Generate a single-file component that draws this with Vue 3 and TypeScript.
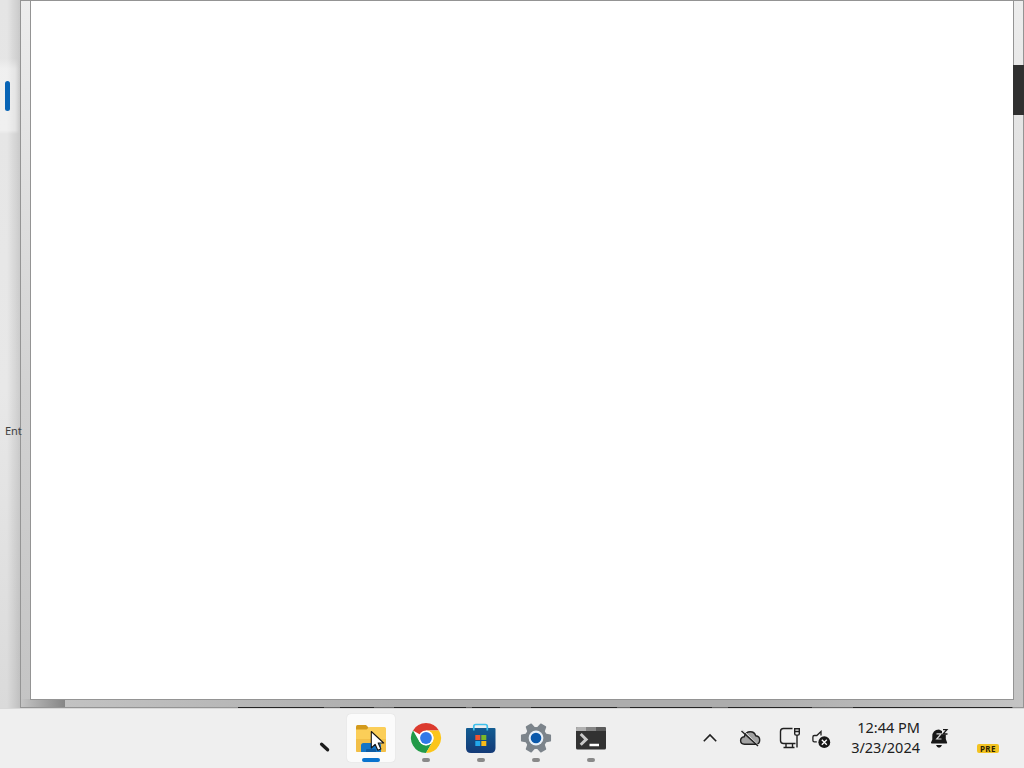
<script setup lang="ts">
const darkEdges = [
  { left: 238, width: 86 },
  { left: 340, width: 34 },
  { left: 394, width: 72 },
  { left: 472, width: 28 },
  { left: 531, width: 86 },
  { left: 630, width: 82 },
  { left: 728, width: 84 },
  { left: 853, width: 159 },
]
</script>

<template>
  <div class="desktop">
    <div class="workspace">
      <aside class="back-window">
        <div class="nav-item"><i class="nav-mark"></i></div>
        <span class="label">Ent</span>
      </aside>
      <section class="window">
        <i class="bottom-frame"></i>
        <i class="corner-shade"></i>
        <i class="edge base"></i>
        <i v-for="e in darkEdges" :key="e.left" class="edge" :style="{ left: e.left - 21 + 'px', width: e.width + 'px' }"></i>
        <div class="canvas"></div>
        <i class="dark-strip"></i>
      </section>
    </div>

    <footer class="taskbar">
      <div class="apps">
        <svg class="pen" width="12" height="12" viewBox="0 0 12 12"><path d="M2.600 3.200 8.600 8.800" stroke="#1b1b1b" stroke-width="3.300" stroke-linecap="round" /></svg>
        <div class="app active">
          <svg width="48" height="48" viewBox="0 0 48 48">
            <path d="M9 12.500Q9 11 10.500 11H19l3 3-3 3H9z" fill="#d39a1c" />
            <path d="M9 15.500h10.500l3-2.500H37.500Q39 13 39 14.500V36.500Q39 38 37.500 38H10.500Q9 38 9 36.500z" fill="#fbce58" />
            <path d="M9 25h30v11.500Q39 38 37.500 38H10.500Q9 38 9 36.500z" fill="#f2bf48" />
            <path d="M14 38V31.500Q14 29 16.500 29H31.500Q34 29 34 31.500V38z" fill="#1475c6" />
            <path d="M19 38v-2q0-1 1-1h8q1 0 1 1v2z" fill="#0e5ca3" />
            <path d="M24.300 17.500V34l3.800-3.700 2.700 6 3.100-1.400-2.700-5.900h5.500z" fill="#fff" stroke="#171717" stroke-width="1.100" stroke-linejoin="round" />
          </svg>
          <i class="pill wide"></i>
        </div>
        <div class="app">
          <svg width="48" height="48" viewBox="0 0 48 48">
            <circle cx="24" cy="24" r="15" fill="#fff" />
            <path d="M24 24 11 16.500A15 15 0 0 1 37 16.500H24z" fill="#db3a2e" />
            <path d="M11 16.500A15 15 0 0 0 24 39l6.500-11.250-6.500 3.750-6.500-3.750z" fill="#229a48" />
            <path d="M37 16.500A15 15 0 0 1 24 39l6.500-11.250A7.500 7.500 0 0 0 24 16.500z" fill="#fbc51b" />
            <circle cx="24" cy="24" r="7.500" fill="#fff" /><circle cx="24" cy="24" r="5.900" fill="#3079e8" />
          </svg>
          <i class="pill"></i>
        </div>
        <div class="app">
          <svg width="48" height="48" viewBox="0 0 48 48">
            <defs><linearGradient id="bag" x1="0" y1="0" x2="0" y2="1"><stop stop-color="#125c92" /><stop offset="1" stop-color="#143a77" /></linearGradient></defs>
            <path d="M9 15q0-1 1-1h27.500q1 0 1 1v19q0 5-5 5H14q-5 0-5-5z" fill="url(#bag)" />
            <path d="M16.800 16.500v-4q0-2 2-2h9.500q2 0 2 2v4" fill="none" stroke="#3fc0ec" stroke-width="1.700" />
            <path d="M18.300 21h5v5h-5z" fill="#ef5430" /><path d="M24.300 21h5v5h-5z" fill="#7cb927" />
            <path d="M18.300 27h5v5h-5z" fill="#22a7eb" /><path d="M24.300 27h5v5h-5z" fill="#fabb18" />
          </svg>
          <i class="pill"></i>
        </div>
        <div class="app">
          <svg width="48" height="48" viewBox="0 0 48 48">
            <g fill="#7c848b" stroke="#7c848b" stroke-width="1.500" stroke-linejoin="round">
              <circle cx="24" cy="24" r="10.300" />
              <path v-for="n in 6" :key="n" d="M20.200 15 21.300 9.700h5.400l1.100 5.300z" :transform="`rotate(${n * 60 + 30} 24 24)`" />
            </g>
            <circle cx="24" cy="24" r="7.400" fill="#e8f0f8" /><circle cx="24" cy="24" r="5.300" fill="#0b59ab" />
          </svg>
          <i class="pill"></i>
        </div>
        <div class="app">
          <svg width="48" height="48" viewBox="0 0 48 48">
            <rect x="9" y="13" width="30" height="22.500" rx="1.500" fill="#323232" />
            <path d="M10.500 13H19v4H9v-2.500q0-1.500 1.500-1.500z" fill="#b1b1b1" /><path d="M19 13h10v4H19z" fill="#858585" /><path d="M29 13h8.500q1.500 0 1.500 1.500V17H29z" fill="#5b5b5b" />
            <path d="m13.700 20 5.500 5.400-5.500 5.400" fill="none" stroke="#c9c9c9" stroke-width="2.900" /><path d="M22.500 31H32" stroke="#fff" stroke-width="2.500" />
          </svg>
          <i class="pill"></i>
        </div>
      </div>

      <div class="tray">
        <svg width="150" height="40" viewBox="690 718 150 40" fill="none" stroke="#202020" stroke-width="1.400">
          <path d="m703.800 741.200 6.200-6.200 6.200 6.200" stroke-width="1.600" />
          <path d="M744.500 744.200q-3.900 0-3.900-3.700 0-3.300 3.700-3.800 1.300-5 6-5 4.200 0 5.400 4 4 .5 4 4.300 0 4.200-4.200 4.200z" fill="#a2a2a2" />
          <path d="m742.800 730 15.500 15" stroke="#dedede" stroke-width="1" /><path d="m741.500 731 16.500 15" />
          <path d="M792.500 728.500h-9q-3 0-3 3v9q0 3 3 3h12M786 744v3M792.500 744v3M783.500 747.500h11" />
          <path d="M794.700 728.700h4.600v5q0 1.400-1.400 1.400h-1.800q-1.400 0-1.400-1.400zM797 735v12.500M794.700 731.500h4.600" />
          <path d="M821 735.500v-4l-4.200 4h-2.500q-1.400 0-1.400 1.400v3.600q0 1.400 1.400 1.400h2.500" stroke-width="1.300" />
          <circle cx="824.300" cy="742.200" r="5.900" fill="#171717" stroke="none" /><path d="m821.800 739.700 5 5m0-5-5 5" stroke="#fff" stroke-width="1.300" />
        </svg>
        <div class="clock"><span class="time">12:44 PM</span><span class="date">3/23/2024</span></div>
        <svg class="bell" width="20" height="22" viewBox="930 727 20 22">
          <path d="M939 729.500q-6.700.3-6.700 7v3l-1.300 3q-.3 1 1 1h14.300q1.200 0 .8-1l-1.300-3.500V733z" fill="#171717" /><path d="M936 745h6q-1 2.700-3 2.700t-3-2.700z" fill="#171717" />
          <path d="M936.500 733.800h4.600l-4.400 5.200h4.800" fill="none" stroke="#d9d9d9" stroke-width="1.200" />
          <path d="M942 728h6.500v6.500H942z" fill="#efefef" /><path d="M943 729.700h3.900l-3.900 4.300h4.500" fill="none" stroke="#171717" stroke-width="1.300" />
        </svg>
        <span class="pre">PRE</span>
      </div>
    </footer>
  </div>
</template>

<style>
body { overflow: hidden; }
</style>
<style scoped>
.desktop { width: 1024px; height: 768px; display: grid; grid-template-rows: 708px 60px; overflow: hidden; background: #efefef; font-family: "Noto Sans", sans-serif; }
.workspace { display: flex; min-height: 0; }
.back-window { box-sizing: border-box; flex: none; width: 20px; padding-top: 58px; background: linear-gradient(90deg, transparent 35%, rgba(0,0,0,.12)), linear-gradient(#e5e5e5, #e8e8e8 55%, #dadada); }
.nav-item { height: 76px; display: flex; align-items: center; padding-left: 5px; background: linear-gradient(90deg, rgba(255,255,255,.4), rgba(255,255,255,.4) 75%, transparent); -webkit-mask-image: linear-gradient(transparent, #000 14%, #000 95%, transparent); }
.nav-mark { width: 5px; height: 30px; border-radius: 3px; background: #0763b5; }
.label { position: relative; z-index: 1; display: block; margin: 289px 0 0 5px; font-size: 11px; line-height: 16px; color: #414141; letter-spacing: -.1px; }
.window { position: relative; box-sizing: border-box; flex: none; width: 1004px; padding-left: 9px; border: 1px solid #949494; background: linear-gradient(#ededed, #dedede 30%, #d2d2d2 55%, #c4c4c4); }
.canvas { position: relative; box-sizing: border-box; width: 984px; height: 700px; margin-top: -1px; background: #fff; border: 1px solid #949494; }
.bottom-frame { position: absolute; left: 44px; right: 0; bottom: 0; height: 8px; background: linear-gradient(90deg, #c2c2c2, #adadad 35%, #adadad 70%, #c4c4c4); }
.corner-shade { position: absolute; left: 0; bottom: 0; width: 44px; height: 8px; background: linear-gradient(90deg, #c4c4c4, #858585); }
.dark-strip { position: absolute; right: -1px; top: 64px; width: 11px; height: 50px; background: #303030; }
.edge { position: absolute; bottom: -1px; height: 1px; background: #252525; }
.base { left: 217px; width: 775px; background: #666; }
.taskbar { box-sizing: border-box; position: relative; border-top: 1px solid #d8d8d8; background: #efefef; display: flex; }
.apps { display: flex; align-items: flex-start; padding: 5px 0 0 319px; gap: 7px; }
.pen { margin: 27px 9px 0 0; }
.app { position: relative; width: 48px; height: 48px; flex: none; }
.app svg { display: block; }
.active { background: #fbfbfb; border-radius: 4px; box-shadow: 0 0 1px #ccc; }
.pill { position: absolute; left: 20px; bottom: 0; width: 8px; height: 4px; border-radius: 2px; background: #898989; }
.pill.wide { left: 15px; width: 18px; background: #0873cf; }
.tray { display: flex; position: absolute; left: 690px; top: 0; }
.tray > svg:first-child { margin-top: 9px; }
.clock { width: 80px; padding-top: 8px; display: flex; flex-direction: column; align-items: flex-end; font-size: 14.500px; line-height: 20px; color: #202020; white-space: nowrap; }
.bell { margin: 18px 0 0 10px; }
.pre { margin: 35px 0 0 27px; width: 22px; height: 9px; border-radius: 2px; background: #f3c321; color: #292000; font-size: 8px; line-height: 9px; font-weight: 700; text-align: center; letter-spacing: .5px; }
</style>
